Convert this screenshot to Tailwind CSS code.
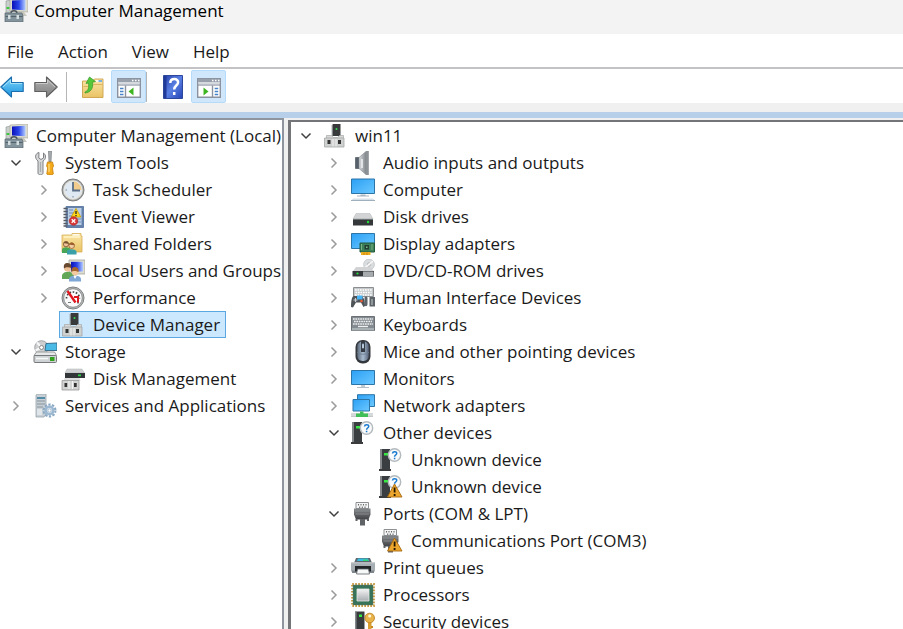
<!DOCTYPE html>
<html lang="en">
<head>
  <meta charset="UTF-8" />
  <meta name="viewport" content="width=device-width, initial-scale=1.0" />
  <title>Computer Management</title>
  <script src="https://cdn.jsdelivr.net/npm/@tailwindcss/browser@4"></script>
</head>
<body class="h-screen flex flex-col overflow-hidden bg-white text-[#1a1a1a] text-[17px] leading-6 font-['Open_Sans','Noto_Sans',sans-serif]">

  <!-- icon set -->
  <svg width="0" height="0" class="absolute" aria-hidden="true">
    <defs>
      <linearGradient id="gBlue" x1="0" y1="0" x2="1" y2="1"><stop offset="0" stop-color="#2ba0f5"/><stop offset="1" stop-color="#6cc8ff"/></linearGradient>
      <linearGradient id="gNavy" x1="0" y1="0" x2="1" y2="0"><stop offset="0" stop-color="#0a10b8"/><stop offset=".5" stop-color="#2a45e8"/><stop offset="1" stop-color="#b4ccff"/></linearGradient>
      <linearGradient id="gSteel" x1="0" y1="0" x2="0" y2="1"><stop offset="0" stop-color="#f4f4f4"/><stop offset="1" stop-color="#a9adb1"/></linearGradient>
      <linearGradient id="gDark" x1="0" y1="0" x2="0" y2="1"><stop offset="0" stop-color="#85888b"/><stop offset="1" stop-color="#404245"/></linearGradient>
      <linearGradient id="gFolder" x1="0" y1="0" x2="0" y2="1"><stop offset="0" stop-color="#fbe7a8"/><stop offset="1" stop-color="#e9c264"/></linearGradient>
      <linearGradient id="gArrow" x1="0" y1="0" x2="0" y2="1"><stop offset="0" stop-color="#7fd6fb"/><stop offset="1" stop-color="#1a92dd"/></linearGradient>
      <linearGradient id="gArrowOff" x1="0" y1="0" x2="0" y2="1"><stop offset="0" stop-color="#b5b5b5"/><stop offset="1" stop-color="#7d7d7d"/></linearGradient>
      <linearGradient id="gHelp" x1="0" y1="0" x2="1" y2="1"><stop offset="0" stop-color="#2540a8"/><stop offset=".5" stop-color="#5a80e4"/><stop offset="1" stop-color="#2443b4"/></linearGradient>
      <linearGradient id="gMouse" x1="0" y1="0" x2="1" y2="0"><stop offset="0" stop-color="#5c6a7c"/><stop offset=".5" stop-color="#a9bccf"/><stop offset="1" stop-color="#56637a"/></linearGradient>
      <linearGradient id="gSpeaker" x1="0" y1="0" x2="1" y2="0"><stop offset="0" stop-color="#d9dcdf"/><stop offset="1" stop-color="#7b8086"/></linearGradient>
    </defs>

    <symbol id="computer-management" viewBox="0 0 24 24">
      <path d="M2 3l5-1v12l-5 1z" fill="#c9cfcb" stroke="#8a928e" stroke-width=".6"/>
      <rect x="2.500" y="9" width="3" height="2" fill="#3fc63f"/>
      <path d="M6 1l18-1v14l-18-1z" fill="#dcdccf" stroke="#a9aa9e" stroke-width=".7"/>
      <path d="M8 2.500l13.500-.7v10.500L8 11.500z" fill="url(#gNavy)"/>
      <path d="M11 14h9l3 4h-9z" fill="#c5c6bd"/>
      <path d="M7 15c0-3 6-3 6 0" fill="none" stroke="#4b565c" stroke-width="1.400"/>
      <path d="M1 15h17l1 3v6H1z" fill="#84949c" stroke="#56666e" stroke-width=".7"/>
      <path d="M1.500 18.500h17" stroke="#53626a"/>
      <rect x="4" y="17" width="2.500" height="4" fill="#d4dde0"/><rect x="12.500" y="17" width="2.500" height="4" fill="#d4dde0"/>
    </symbol>

    <symbol id="tools" viewBox="0 0 24 24">
      <path d="M6 1.500c-3 .5-4.500 4-2.500 7l1.500 1.500v12c0 2.500 5 2.500 5 0V10c3-1.500 3.500-6 .5-8v5L8 8.500 5.800 7z" fill="#d5d7d8" stroke="#7e8285" stroke-width="1"/>
      <path d="M7.500 11v10" stroke="#a9adb0" stroke-width="1.200"/>
      <path d="M15.500 0h3l-.5 11h-2z" fill="#a9adb0" stroke="#777b7e" stroke-width=".7"/>
      <path d="M14.500 11h5l1 4-1 2 .8 6c-1.500 1.300-5 1.300-6.500 0l.8-6-1-2z" fill="#f3ab1b" stroke="#c77d0a" stroke-width=".8"/>
      <path d="M16 13v8" stroke="#fddf83" stroke-width="1.200"/>
    </symbol>

    <symbol id="clock" viewBox="0 0 24 24">
      <circle cx="12" cy="12" r="11" fill="#a4a6a7" stroke="#7b7e7f"/>
      <circle cx="12" cy="12" r="9.700" fill="#e5e4dc"/>
      <circle cx="12" cy="12" r="8.400" fill="#dfe9f3"/>
      <path d="M12 12V3.600a8.400 8.400 0 0 1 8.400 8.400z" fill="#f1cc8d"/>
      <path d="M12 4v8.500h7" fill="none" stroke="#5b7088" stroke-width="1.800"/>
      <path d="M4.500 12h1.500M12 18v1.500" stroke="#7a8895"/>
    </symbol>

    <symbol id="event-viewer" viewBox="0 0 24 24">
      <path d="M5 1.500h17.500v21H5z" fill="#6582ad" stroke="#6580a8"/>
      <path d="M7 3h13.500v17H7z" fill="#bccfe4"/>
      <path d="M8 5h4M8 8h5M8 11h4M15 14h5M15 17h5" stroke="#6e8db5"/>
      <path d="M2.500 3.500h4M2.500 6.500h4M2.500 9.500h4M2.500 12.500h4M2.500 15.500h4M2.500 18.500h4M2.500 21h4" stroke="#555c66" stroke-width="1.600"/>
      <path d="M15 3.500l4.800 8.500H10.200z" fill="#ffd91a" stroke="#c79c00" stroke-width=".8"/>
      <path d="M15 6v3M15 10v1.200" stroke="#222" stroke-width="1.300"/>
      <circle cx="12.500" cy="16" r="4.300" fill="#da3737" stroke="#a92323" stroke-width=".6"/>
      <path d="M10.700 14.200l3.600 3.600M14.300 14.200l-3.600 3.600" stroke="#fff" stroke-width="1.300"/>
    </symbol>

    <symbol id="shared-folders" viewBox="0 0 24 24">
      <path d="M1 3h10V1.500h9V4h1v16H1z" fill="url(#gFolder)" stroke="#d7ad52" stroke-width=".8"/>
      <path d="M3 5h16" stroke="#fff4ca" stroke-width="1.500"/>
      <path d="M11.500 2.800h7" stroke="#fff" stroke-width="1.300"/>
      <path d="M1 21v-3.500c.5-3 7.500-3 8.500 0V21z" fill="#49a657"/>
      <circle cx="5" cy="12.200" r="2.600" fill="#f0c39b" stroke="#765131" stroke-width=".8"/>
      <path d="M2.500 11.500c.5-3 4.500-3 5.200 0-1.500.6-3.500-.6-5.200 0z" fill="#7a5330"/>
      <path d="M6 22.500v-3c.5-3 8.500-3 9.500 0v3z" fill="#3aa0a8"/>
      <circle cx="10.700" cy="13.700" r="2.800" fill="#f3cda6" stroke="#9a5e29" stroke-width=".8"/>
      <path d="M8 13c.5-3.300 4.800-3.300 5.500 0-1.500.6-3.500-.6-5.500 0z" fill="#9e5f28"/>
    </symbol>

    <symbol id="users" viewBox="0 0 24 24">
      <path d="M8 1h16v14H8z" fill="#dcdcd1" stroke="#a4a59b" stroke-width=".8"/>
      <path d="M10 2.800h12v9.700H10z" fill="url(#gNavy)"/>
      <path d="M1 20v-4c1.500-4.500 10-4.500 12 0v4z" fill="#62a658"/>
      <circle cx="6.500" cy="9" r="3.500" fill="#efc198"/>
      <path d="M3 9.500C2 4.500 5 3.900 6.800 4c2.800.1 4 2.300 3.500 5C8.500 8 5 7.500 3 9.500z" fill="#68482e"/>
      <path d="M8 22.500V19.500c1-4 11-4 12 0v3z" fill="#7fa7d6"/>
      <path d="M12.500 17l1.500 3 1.700-3z" fill="#fff"/>
      <circle cx="14" cy="13" r="3.400" fill="#f2c9a1"/>
      <path d="M10.500 13C10 8.600 12.500 8 14.200 8.100c2.700.1 3.800 2.300 3.300 4.900-2-1.200-5.200-1.700-7 0z" fill="#a4642b"/>
    </symbol>

    <symbol id="performance" viewBox="0 0 24 24">
      <circle cx="12" cy="12" r="11" fill="#b9bbbb" stroke="#7e8182"/>
      <circle cx="12" cy="12" r="9.300" fill="#fafafa" stroke="#77797a" stroke-width=".8"/>
      <path d="M5.500 12.500a6.500 6.500 0 0 1 13 0" fill="none" stroke="#444" stroke-width="1.700" stroke-dasharray="1.600 1.600"/>
      <path d="M6.500 5l8 11.500" stroke="#e0171f" stroke-width="2.400"/>
      <path d="M13 11h4.500M17 10v7" stroke="#e0171f" stroke-width="2"/>
      <path d="M7 16.500h3M16 17h2" stroke="#777"/>
    </symbol>

    <symbol id="device-manager" viewBox="0 0 24 24">
      <path d="M10 0h7.500v12H10z" fill="#37393b"/><path d="M8.700 1L10 0v12H8.700z" fill="#85888b"/>
      <circle cx="13.500" cy="5" r="1" fill="#35e051"/>
      <path d="M3.500 11.500h5l2 2h4l2-2h4v3h-17z" fill="#d8d8d8" stroke="#a7a7a7" stroke-width=".7"/>
      <path d="M1.500 14h19.500v9H1.500z" fill="#cfd0d0" stroke="#a3a6a7" stroke-width=".8"/>
      <rect x="4.500" y="16" width="3" height="4" fill="#333"/><rect x="15" y="16" width="3" height="4" fill="#333"/>
      <path d="M10 15v7.500M13 15v7.500" stroke="#f1f1f1"/>
    </symbol>

    <symbol id="storage" viewBox="0 0 24 24">
      <circle cx="8.500" cy="7.500" r="6.800" fill="#cdcfd0" stroke="#8f9294" stroke-width=".8"/>
      <path d="M8.500 7.500L4 2.500M8.500 7.500l-6 3" stroke="#f7f7f7" stroke-width="2"/>
      <circle cx="8.500" cy="7.500" r="2" fill="#fff" stroke="#888"/>
      <path d="M13 3.500l11-.5v7.500H12z" fill="#4bbbe6" stroke="#396f8e"/>
      <path d="M3.500 12h18l2 3.500H1z" fill="#e6e8e9" stroke="#999"/>
      <rect x="1" y="15.500" width="22.500" height="7" rx="1" fill="#d0d3d5" stroke="#777a7c"/>
      <path d="M3 18.500h12" stroke="#f8f8f8" stroke-width="1.500"/><path d="M17 17h4.500v4H17z" fill="#33a31f"/>
    </symbol>

    <symbol id="disk-management" viewBox="0 0 24 24">
      <path d="M6 2h15l2.500 4H4z" fill="#cfd1d2" stroke="#aeb0b1" stroke-width=".5"/>
      <path d="M4 6h20v5H4z" fill="#333638"/><rect x="17" y="7.500" width="3" height="1.700" fill="#2dd646"/>
      <path d="M3.500 11h15l1 3h-17z" fill="#dedede"/>
      <path d="M1 13.500h17v9.500H1z" fill="#d2d3d3" stroke="#999b9c" stroke-width=".8"/>
      <rect x="3.500" y="16" width="2.700" height="4" fill="#333"/><rect x="13" y="16" width="2.700" height="4" fill="#333"/>
      <path d="M8 14v8M11.500 14v8" stroke="#f5f5f5"/>
    </symbol>

    <symbol id="services" viewBox="0 0 24 24">
      <path d="M3 1l2-1h8v20l-2 3H3z" fill="#c8d0d6" stroke="#98a3aa" stroke-width=".8"/>
      <path d="M4 4h8" stroke="#2e7698" stroke-width="1.500"/><path d="M4 7h8M4 10h8M4 13h6" stroke="#84929b"/>
      <path d="M4 15h5v6H4z" fill="#dfe5e9"/>
      <circle cx="16.500" cy="16.500" r="5.900" fill="none" stroke="#8aa9c5" stroke-width="2.200" stroke-dasharray="2.300 1.400"/>
      <circle cx="16.500" cy="16.500" r="3.700" fill="#f3f8fc" stroke="#9db9d2" stroke-width="2.600"/>
      <circle cx="16.500" cy="16.500" r="1.600" fill="#fff" stroke="#7898b6" stroke-width=".6"/>
    </symbol>

    <symbol id="audio" viewBox="0 0 24 24">
      <path d="M4.500 6.500h4v11h-4z" fill="#55606b" stroke="#404952" stroke-width=".6"/>
      <path d="M8 6.500L15.500 0v24L8 17.500z" fill="url(#gSpeaker)" stroke="#83888d" stroke-width=".6"/>
      <path d="M15 0h2.800v24H15z" fill="#8d9297"/><path d="M11 8v9" stroke="#f1f2f3" stroke-width="1.500"/>
    </symbol>

    <symbol id="computer" viewBox="0 0 24 24">
      <path d="M.5 1h23v14.500H.5z" fill="url(#gBlue)" stroke="#2c75a8"/>
      <path d="M9.500 16.500h5V18h-5z" fill="#aebac3"/><path d="M6 18h12" stroke="#a8b4bd"/>
      <path d="M2 20.500h20l2 2H0z" fill="#d7e0e7"/><path d="M0 22.500h24" stroke="#9fafbb"/>
    </symbol>

    <symbol id="monitor" viewBox="0 0 24 24">
      <path d="M.5 3.500h23v14H.5z" fill="url(#gBlue)" stroke="#2c75a8"/>
      <path d="M10 18h4v2h-4z" fill="#c0cbd2"/><path d="M6 20.500h12" stroke="#b3bec6"/>
    </symbol>

    <symbol id="disk" viewBox="0 0 24 24">
      <path d="M5 8.500h14l3 5.500H2z" fill="#d2d4d5" stroke="#b2b5b6" stroke-width=".5"/>
      <path d="M2 14h20v6.500H2z" fill="#34383a"/><path d="M2 14.400h20" stroke="#73777a"/><circle cx="17" cy="17" r="1.200" fill="#27dd3c"/>
    </symbol>

    <symbol id="display-adapter" viewBox="0 0 24 24">
      <path d="M.5 1.500H23.500v15H.5z" fill="url(#gBlue)" stroke="#2c75a8"/>
      <path d="M9 11h14.500v9H9z" fill="#3c8158" stroke="#23583c"/><path d="M10 20h9.500v3H10z" fill="#eeae22"/>
      <path d="M13 20.500V23M16 20.500V23" stroke="#b87500" stroke-width=".7"/>
      <path d="M13.500 13h4.500v4.500h-4.500z" fill="#243b30"/><path d="M15 14.500h1.500V16H15z" fill="#75bf87"/>
      <path d="M10.500 12.500v5M21 12.500v5" stroke="#b6deb0" stroke-dasharray="1 1"/>
    </symbol>

    <symbol id="dvd" viewBox="0 0 24 24">
      <circle cx="18" cy="5.500" r="5.400" fill="#dadddf" stroke="#bbc0c3" stroke-width=".7"/><circle cx="18" cy="5.500" r="1.600" fill="#fff" stroke="#999" stroke-width=".7"/>
      <path d="M18 5.500L22 2M18 5.500l-4 3" stroke="#f8f8f8" stroke-width="1.500"/>
      <path d="M5 8h14l4 4H2z" fill="#d1d3d4"/>
      <path d="M1.500 12H23v5.500H1.500z" fill="#34383a"/><path d="M12 12.500h10.500v5H12z" fill="#a7abad"/><circle cx="6.500" cy="14.500" r="1.100" fill="#27dd3c"/>
    </symbol>

    <symbol id="hid" viewBox="0 0 24 24">
      <path d="M2.500 1.500h20v9h-20z" fill="#c5c9cb" stroke="#8b8f92"/>
      <path d="M4 4h17M4.500 6.500h16M4 9h17" stroke="#fff" stroke-width="1.400" stroke-dasharray="1.700 .8"/>
      <path d="M0 21c0-7 1-11 3-11h7c3 1 4 5 4 10l-1.500 1-2.500-4.500H5L2 21.500z" fill="#4e5357"/>
      <path d="M13.500 18v-6c0-2 3-2 3 0v6c0 3-3 3-3 0zM18.500 11H24v9.500h-5.500z" fill="#5d6469"/>
      <path d="M4.500 12v4M2.500 14h4" stroke="#c8cdd0" stroke-width="1.200"/>
      <path d="M6 9.500h5.500v4H6z" fill="#46b3f5"/><circle cx="10.500" cy="15" r="1.300" fill="#e85c33"/><path d="M21 13v6" stroke="#c6cccf"/>
    </symbol>

    <symbol id="keyboard" viewBox="0 0 24 24">
      <path d="M.5 3.500h23v14H.5z" fill="#858c91" stroke="#6b7176"/><path d="M1 15h22v2.500H1z" fill="#a9b0b4"/>
      <path d="M2 6h20M3 8.500h18M2 11h20" stroke="#eef0f1" stroke-width="1.400" stroke-dasharray="1.700 .7"/><path d="M7 13.500h10" stroke="#eef0f1" stroke-width="1.300"/>
    </symbol>

    <symbol id="mouse" viewBox="0 0 24 24">
      <rect x="4.500" y="0" width="15" height="23.500" rx="7" fill="#34383d"/>
      <rect x="6.300" y="1.500" width="11.400" height="19.500" rx="5" fill="url(#gMouse)"/>
      <path d="M10 1h4v11h-4z" fill="#343b45"/><rect x="11" y="3.500" width="2" height="5" rx="1" fill="#b8cbdd"/>
      <path d="M6 12c2 3 10 3 12 0" fill="none" stroke="#6c7d91" stroke-width=".8"/>
    </symbol>

    <symbol id="network" viewBox="0 0 24 24">
      <path d="M6.500 .7h17v11.800h-17z" fill="url(#gBlue)" stroke="#2c75a8"/>
      <path d="M2 5.500h16.500v11.500H2z" fill="url(#gBlue)" stroke="#2c75a8"/>
      <path d="M0 19h22v3.500H0z" fill="#d6d9da"/><path d="M0 22.500h22" stroke="#b4b9bc" stroke-width=".7"/>
      <path d="M9 17.500h3.500V19.500H17v3.500H5v-3.500h4z" fill="#40bf58"/>
    </symbol>

    <symbol id="tower" viewBox="0 0 24 24">
      <path d="M1 1.500L3 1h8v20H1z" fill="#3b3e40"/><path d="M1 1.500L3 1v20H1z" fill="#85898c"/>
      <path d="M5 5h4v2.500H5z" fill="#37e843"/><path d="M0 21h12v2H0z" fill="#393b3d"/>
    </symbol>

    <symbol id="unknown" viewBox="0 0 24 24">
      <use href="#tower" width="24" height="24"/>
      <circle cx="15.500" cy="7" r="6.200" fill="#f8fafb" stroke="#b4b9bd" stroke-width="1.400"/>
      <path d="M13.500 5.500c.2-2.500 4.400-2.300 4.200 0-.2 1.500-2.100 1.600-2.100 3.200M15.600 9.800v1.400" fill="none" stroke="#1879cf" stroke-width="1.500"/>
    </symbol>

    <symbol id="warning" viewBox="0 0 24 24">
      <path d="M15.500 9l7.500 13h-14.500z" fill="#eda62c" stroke="#a8690e" stroke-width=".9" stroke-linejoin="round"/>
      <path d="M15.600 12.500v5M15.600 19v2" stroke="#251602" stroke-width="1.800"/>
    </symbol>

    <symbol id="unknown-warning" viewBox="0 0 24 24">
      <use href="#unknown" width="24" height="24"/><use href="#warning" width="24" height="24"/>
    </symbol>

    <symbol id="port" viewBox="0 0 24 24">
      <path d="M5 .5h12.500v6H5z" fill="#f6f6f6" stroke="#8d9093"/><path d="M7.500 2v1.500M10 2v1.500M12.500 2v1.500M15 2v1.500M8.700 4.500v1.500M11.300 4.500v1.500M14 4.500v1.500" stroke="#66696c" stroke-width="1.100"/>
      <path d="M3 6.500h16.500v6l-2 5H5l-2-5z" fill="url(#gDark)"/><path d="M4 9h14.500M4.500 12h13.500" stroke="#909396" stroke-width=".8"/>
      <path d="M4.500 17h2v2h-2zM16 17h2v2h-2zM9 17h5v6.500H9z" fill="#606366"/>
    </symbol>

    <symbol id="port-warning" viewBox="0 0 24 24">
      <use href="#port" width="24" height="24"/><use href="#warning" width="24" height="24"/>
    </symbol>

    <symbol id="printer" viewBox="0 0 24 24">
      <path d="M5 2h14l2 5H3z" fill="#5d676d"/><path d="M7 2.500h10L18 5H6z" fill="#39bce2"/><path d="M12 3.500h4.500l1 1.500H12z" fill="#31d274"/>
      <path d="M0 6.500h24v9H0z" fill="#a8afb4"/><path d="M0 6.800h24" stroke="#c9ced1"/><path d="M1 14.500h22v2.500H1z" fill="#7f868b"/>
      <path d="M4 10h16v5.500H4z" fill="#24272a"/><path d="M6.500 13h11l1 5H5.500z" fill="#f7f8f8" stroke="#5a6064" stroke-width=".8"/>
    </symbol>

    <symbol id="processor" viewBox="0 0 24 24">
      <rect x="1.200" y="1.200" width="21.600" height="21.600" fill="none" stroke="#c99c45" stroke-width="2.200" stroke-dasharray="1.700 1.300"/>
      <path d="M2.300 2.300h19.400v19.400H2.300z" fill="#37745a" stroke="#2b5d47" stroke-width=".8"/>
      <path d="M6 6h12v12H6z" fill="url(#gSteel)" stroke="#e5e8e7" stroke-width=".8"/>
    </symbol>

    <symbol id="security" viewBox="0 0 24 24">
      <path d="M4 1.500h9.500V22H4z" fill="#393c3f"/><path d="M4 1.500h1.500V22H4z" fill="#85898c"/><path d="M8 4.500h3V7H8z" fill="#37e843"/>
      <path d="M17 12h3.500v12H17z" fill="#d99d31"/><path d="M20 16h2v2h-2zM20 20h2v2h-2z" fill="#c48722"/>
      <circle cx="18.700" cy="8" r="4.800" fill="#e7b34a" stroke="#bb7e1d" stroke-width=".8"/><circle cx="18.700" cy="6" r="1.500" fill="#fff8df"/>
    </symbol>

    <symbol id="back" viewBox="0 0 24 24">
      <path d="M.8 12L11.500 2v5.500h11.700v9H11.500V22z" fill="url(#gArrow)" stroke="#1b6fae" stroke-width="1.100" stroke-linejoin="round"/>
      <path d="M3 12l7.500-7v3.500H22" fill="none" stroke="#b4e8fd" stroke-width=".8"/>
    </symbol>
    <symbol id="forward" viewBox="0 0 24 24">
      <path d="M23.200 12L12.500 2v5.500H.8v9h11.700V22z" fill="url(#gArrowOff)" stroke="#5f5f5f" stroke-width="1.100" stroke-linejoin="round"/>
      <path d="M2 8.500h11.500V5L21 12" fill="none" stroke="#d3d3d3" stroke-width=".8"/>
    </symbol>
    <symbol id="up-folder" viewBox="0 0 24 24">
      <path d="M1.500 6h10l2-2h8.500v18.500H1.500z" fill="url(#gFolder)" stroke="#cda04a" stroke-width=".9"/>
      <path d="M14.500 6h6.500" stroke="#fff" stroke-width="1.500"/><path d="M17.500 6h3.500" stroke="#4b9de0" stroke-width="1.500"/>
      <path d="M2.500 11.500h8.500l1.500-2H21.500" fill="none" stroke="#d5ab57" stroke-width=".8"/>
      <path d="M4 17c3.500-1.500 4-4 3.500-9L5 8.500 8.500 2l6 4.500-3 .8c1 6.200-2 10.200-7.500 10.700z" fill="#55c83a" stroke="#36982a" stroke-width=".7"/>
    </symbol>
    <symbol id="window" viewBox="0 0 24 24">
      <path d="M.7 3.700h22.600v18.600H.7z" fill="#fff" stroke="#8b93a0" stroke-width="1.400"/>
      <path d="M1 4h22v3H1z" fill="#98a0ac"/><path d="M15 5.500h1.500M18 5.500h1.500M21 5.500h1.500" stroke="#fff" stroke-width="1.400"/>
      <path d="M1 8h22" stroke="#c4c9d0" stroke-width="1.400"/><path d="M1 10h22" stroke="#8b93a0" stroke-width="1.200"/>
    </symbol>
    <symbol id="tree-pane" viewBox="0 0 24 24">
      <use href="#window" width="24" height="24"/>
      <path d="M8.500 10.500v12" stroke="#8b93a0" stroke-width="1.400"/><path d="M3 13.500h3.500M3 16.500h3.500M3 19.500h3.500" stroke="#4683c8" stroke-width="1.500"/>
      <path d="M16.500 12.500v8L11.500 16.500z" fill="#3fb521"/>
    </symbol>
    <symbol id="action-pane" viewBox="0 0 24 24">
      <use href="#window" width="24" height="24"/>
      <path d="M15.500 10.500v12" stroke="#8b93a0" stroke-width="1.400"/><path d="M17.700 13.500h3.500M17.700 16.500h3.500M17.700 19.500h3.500" stroke="#4683c8" stroke-width="1.500"/>
      <path d="M6.500 12.500v8l5-4z" fill="#3fb521"/>
    </symbol>
    <symbol id="help" viewBox="0 0 24 24">
      <path d="M2.500.5h19v23h-19z" fill="url(#gHelp)" stroke="#2d479c"/><path d="M3 1h2.500v22H3z" fill="#203a99"/>
      <path d="M9.300 8c0-5.200 8.200-5 7.800-.5-.3 3.200-3.900 3-3.900 7M13.200 17v3" fill="none" stroke="#fff" stroke-width="2.500"/>
    </symbol>

    <symbol id="chevron-right" viewBox="0 0 20 20"><path d="M7.500 5.500l4.500 4.500-4.500 4.500" fill="none" stroke="#9b9b9b" stroke-width="1.500"/></symbol>
    <symbol id="chevron-down" viewBox="0 0 20 20"><path d="M5.500 7.500l4.500 4.500 4.500-4.500" fill="none" stroke="#404040" stroke-width="1.500"/></symbol>
  </svg>

  <header class="h-[34px] shrink-0 flex items-start gap-1.5 pl-1 bg-[#f3f3f3] text-black">
    <svg class="size-6 -mt-0.5"><use href="#computer-management"/></svg>
    <h1 class="-mt-px">Computer Management</h1>
  </header>

  <nav class="h-[35px] shrink-0 flex items-center gap-6 pt-0.5 pl-[7px] border-b-2 border-[#c3c3c5]" aria-label="Menu">
    <button>File</button>
    <button>Action</button>
    <button>View</button>
    <button>Help</button>
  </nav>

  <div class="h-[34px] shrink-0 flex items-center pt-px" role="toolbar" aria-label="Standard">
    <button class="mr-2.5" aria-label="Back"><svg class="size-6"><use href="#back"/></svg></button>
    <button aria-label="Forward"><svg class="size-6"><use href="#forward"/></svg></button>
    <span class="w-px h-[30px] mx-2 bg-[#b5b5b5]"></span>
    <button class="w-9 h-[33px] flex items-center justify-center" aria-label="Up one level"><svg class="size-6"><use href="#up-folder"/></svg></button>
    <button class="w-[35px] h-[33px] flex items-center justify-center rounded-xs border border-[#b5dbfb] bg-[#d0e7fb]" aria-label="Show or hide console tree" aria-pressed="true"><svg class="size-6"><use href="#tree-pane"/></svg></button>
    <span class="w-px h-[30px] mr-2 bg-[#b5b5b5]"></span>
    <button class="w-9 h-[33px] flex items-center justify-center" aria-label="Help"><svg class="size-6"><use href="#help"/></svg></button>
    <button class="w-[35px] h-[33px] flex items-center justify-center rounded-xs border border-[#b5dbfb] bg-[#d0e7fb]" aria-label="Show or hide action pane" aria-pressed="true"><svg class="size-6"><use href="#action-pane"/></svg></button>
  </div>

  <div class="h-[9px] shrink-0 bg-[#f0f0f0]"></div>
  <div class="h-1.5 shrink-0 bg-[#b7cfe8]"></div>

  <main class="flex-1 min-h-0 flex gap-1 bg-[#f0f0f0]">
    <section class="w-[284px] shrink-0 overflow-hidden bg-white border-t-2 border-r-2 border-[#8e959e] pt-0.5" aria-label="Console tree">
      <ul id="consoleTree" class="pl-0.5"></ul>
    </section>
    <section class="flex-1 min-w-0 pt-0.5" aria-label="Devices">
      <div class="h-full overflow-hidden bg-white border-t-2 border-l-3 border-[#737578]">
        <ul id="deviceTree" class="pl-[5px]"></ul>
      </div>
    </section>
  </main>

  <script>
    // [label, icon, state, children]; state is "open", "closed", "leaf" or "root" (no chevron column)
    const consoleItems = [
      ["Computer Management (Local)", "computer-management", "root", [
        ["System Tools", "tools", "open", [
          ["Task Scheduler", "clock", "closed"],
          ["Event Viewer", "event-viewer", "closed"],
          ["Shared Folders", "shared-folders", "closed"],
          ["Local Users and Groups", "users", "closed"],
          ["Performance", "performance", "closed"],
          ["Device Manager", "device-manager", "leaf"],
        ]],
        ["Storage", "storage", "open", [
          ["Disk Management", "disk-management", "leaf"],
        ]],
        ["Services and Applications", "services", "closed"],
      ]],
    ];

    const deviceItems = [
      ["win11", "device-manager", "open", [
        ["Audio inputs and outputs", "audio", "closed"],
        ["Computer", "computer", "closed"],
        ["Disk drives", "disk", "closed"],
        ["Display adapters", "display-adapter", "closed"],
        ["DVD/CD-ROM drives", "dvd", "closed"],
        ["Human Interface Devices", "hid", "closed"],
        ["Keyboards", "keyboard", "closed"],
        ["Mice and other pointing devices", "mouse", "closed"],
        ["Monitors", "monitor", "closed"],
        ["Network adapters", "network", "closed"],
        ["Other devices", "unknown", "open", [
          ["Unknown device", "unknown", "leaf"],
          ["Unknown device", "unknown-warning", "leaf"],
        ]],
        ["Ports (COM & LPT)", "port", "open", [
          ["Communications Port (COM3)", "port-warning", "leaf"],
        ]],
        ["Print queues", "printer", "closed"],
        ["Processors", "processor", "closed"],
        ["Security devices", "security", "closed"],
      ]],
    ];

    function toggleHtml(label, state) {
      if (state === "root") return "";
      if (state === "leaf") return '<span class="w-5 mr-[5px] shrink-0"></span>';
      const icon = state === "open" ? "chevron-down" : "chevron-right";
      return `<button class="mr-[5px] shrink-0" aria-label="Toggle ${label}"><svg class="size-5"><use href="#${icon}"/></svg></button>`;
    }

    function render(items, selected) {
      return items.map(([label, icon, state, children]) => {
        const text = label.replace("&", "&amp;");
        const look = label === selected ? "border-[#5aa7e2] bg-[#cce8ff]" : "border-transparent";
        const indent = state === "root" ? "pl-1" : "pl-7";
        return `<li>
          <div class="flex items-center h-[27px]">
            ${toggleHtml(text, state)}
            <a href="#" class="flex items-center h-[27px] gap-2 pl-px pr-[5px] border whitespace-nowrap ${look}"><svg class="size-6 shrink-0"><use href="#${icon}"/></svg>${text}</a>
          </div>
          ${children ? `<ul class="${indent}">${render(children, selected)}</ul>` : ""}
        </li>`;
      }).join("");
    }

    document.getElementById("consoleTree").innerHTML = render(consoleItems, "Device Manager");
    document.getElementById("deviceTree").innerHTML = render(deviceItems, null);
  </script>
</body>
</html>
